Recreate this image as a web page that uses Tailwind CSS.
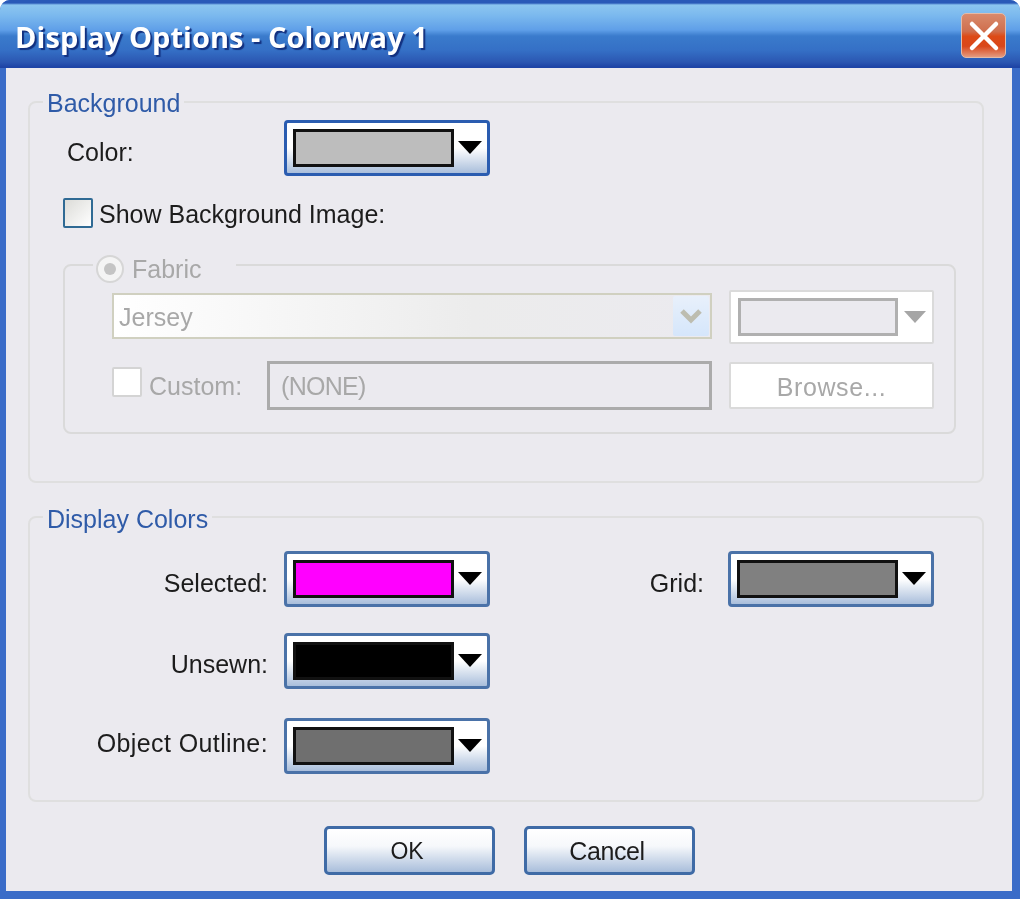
<!DOCTYPE html>
<html lang="en">
<head>
    <meta charset="UTF-8">
    <title>Display Options - Colorway 1</title>
    <script src="https://cdn.jsdelivr.net/npm/@tailwindcss/browser@4"></script>
</head>
<body class="bg-white">
<div class="w-[1020px] h-[899px] flex flex-col rounded-t-[10px] overflow-hidden bg-[#3a6cc8] font-['Liberation_Sans',sans-serif] text-[25px] leading-[30px] text-[#1c1c1c] blur-[0.6px]">

    <!-- Title bar -->
    <div class="h-[68px] shrink-0 flex items-center justify-between pl-[15px] pr-[14px] bg-[linear-gradient(#2a5ab8_0,#2a5ab8_3px,#8cc6f0_5px,#7ab8ee_16px,#5f9fe8_30px,#3a7bcc_36px,#3570c6_50px,#2b57b2_62px,#1e44a6_67px)]">
        <span class="pt-[6px] font-['Open_Sans',sans-serif] font-bold text-[29px] tracking-[0.05px] text-white [text-shadow:2px_2px_1px_#12307f]">Display Options - Colorway 1</span>
        <div class="w-[45px] h-[45px] mt-[3px] rounded-[5px] border border-[#e3bba8] bg-[linear-gradient(#d98a6c_0,#cf6f4e_40%,#dd4a16_52%,#d9471a_75%,#e59a80_100%)] flex items-center justify-center">
            <svg width="34" height="34" viewBox="0 0 34 34"><path d="M5 5 L29 29 M29 5 L5 29" stroke="#fff" stroke-width="4.5" stroke-linecap="round"/></svg>
        </div>
    </div>

    <!-- Dialog body -->
    <div class="flex-1 ml-[6px] mr-[8px] mb-[8px] bg-[#ebeaef] pt-[19px] pl-[22px] pr-[28px]">

        <fieldset class="border-2 border-[#dfdfdf] rounded-[8px] h-[396px] min-w-0">
            <legend class="ml-[13px] px-[4px] h-[30px] leading-[32px] text-[#2f5ba8]">Background</legend>
            <div class="flex items-center pt-[3px] pl-[37px]">
                <span class="w-[217px] pt-[8px]">Color:</span>
                <div class="w-[206px] h-[56px] rounded-[4px] border-[3px] border-[#2a5cb0] bg-[linear-gradient(#ffffff_0,#ffffff_50%,#a9bedb_100%)] flex items-center pl-[6px] pr-[5px] justify-between">
                    <div class="w-[161px] h-[38px] border-[3px] border-[#111] bg-[#bdbdbd]"></div>
                    <svg class="mb-[2px]" width="24" height="13" viewBox="0 0 24 13"><polygon points="0,0 24,0 12,13" fill="#000"/></svg>
                </div>
            </div>
            <div class="flex items-center mt-[22px] pl-[33px]">
                <div class="w-[30px] h-[30px] border-2 border-[#2f6a94] rounded-[2px] bg-[linear-gradient(135deg,#dcdcd8,#ffffff)]"></div>
                <span class="ml-[6px] h-[30px] leading-[32px]">Show Background Image:</span>
            </div>

            <!-- Fabric group (disabled) -->
            <fieldset class="ml-[33px] mr-[26px] mt-[26px] h-[180px] border-2 border-[#dadada] rounded-[8px] min-w-0 text-[#a8a8a8]">
                <legend class="ml-[28px] w-[143px] h-[22px] flex items-center">
                    <div class="flex items-center translate-y-[4px]">
                        <div class="ml-[3px] w-[28px] h-[28px] rounded-full border-2 border-[#d6d6d6] bg-[#f4f4f4] flex items-center justify-center">
                            <div class="w-[12px] h-[12px] rounded-full bg-[#c4c4c4]"></div>
                        </div>
                        <span class="ml-[8px]">Fabric</span>
                    </div>
                </legend>
                <div class="flex pl-[47px] pr-[20px] pt-[14px]">
                    <div class="w-[600px] h-[46px] mt-[3px] border-2 border-[#d0d0c0] bg-[linear-gradient(90deg,#ffffff,#ececec_60%,#ebeaef)] flex items-center justify-between pl-[5px] pr-[1px]">
                        <span class="pt-[2px]">Jersey</span>
                        <div class="w-[36px] h-[40px] rounded-[2px] bg-[linear-gradient(#e8f0fb,#d5e6fb)] flex items-center justify-center">
                            <svg width="24" height="16" viewBox="0 0 24 16"><path d="M3 3 L12 12 L21 3" fill="none" stroke="#bdbdb0" stroke-width="5"/></svg>
                        </div>
                    </div>
                    <div class="ml-[17px] w-[205px] h-[54px] border-2 border-[#dadada] rounded-[2px] bg-white flex items-center justify-between pl-[7px] pr-[6px]">
                        <div class="w-[160px] h-[38px] border-[3px] border-[#b0b0b0] bg-[#ebeaef]"></div>
                        <svg width="22" height="12" viewBox="0 0 22 12"><polygon points="0,0 22,0 11,12" fill="#a6a6a6"/></svg>
                    </div>
                </div>
                <div class="flex items-center pl-[47px] pr-[20px] mt-[17px]">
                    <div class="w-[30px] h-[30px] mb-[8px] border-2 border-[#d4d4d4] rounded-[2px] bg-white"></div>
                    <span class="ml-[7px] w-[118px]">Custom:</span>
                    <div class="w-[445px] h-[49px] border-[3px] border-[#ababab] flex items-center pl-[11px] tracking-[-0.7px]">(NONE)</div>
                    <div class="ml-[17px] w-[205px] h-[47px] pt-[3px] border-2 border-[#dadada] rounded-[2px] bg-white flex items-center justify-center tracking-[0.6px]">Browse...</div>
                </div>
            </fieldset>
        </fieldset>

        <fieldset class="mt-[19px] border-2 border-[#dfdfdf] rounded-[8px] h-[300px] min-w-0">
            <legend class="ml-[13px] px-[4px] h-[30px] leading-[34px] text-[#2f5ba8]">Display Colors</legend>
            <div class="grid grid-cols-[238px_206px_230px_206px] items-center pt-[19px] [&>span]:text-right">
                <span class="pt-[8px]">Selected:</span>
                <div class="ml-[16px] w-[206px] h-[56px] rounded-[4px] border-[3px] border-[#4a72a8] bg-[linear-gradient(#ffffff_0,#ffffff_50%,#a9bedb_100%)] flex items-center pl-[6px] pr-[5px] justify-between">
                    <div class="w-[161px] h-[38px] border-[3px] border-[#111] bg-[#ff00ff]"></div>
                    <svg class="mb-[2px]" width="24" height="13" viewBox="0 0 24 13"><polygon points="0,0 24,0 12,13" fill="#000"/></svg>
                </div>
                <span class="pt-[8px]">Grid:</span>
                <div class="ml-[24px] w-[206px] h-[56px] rounded-[4px] border-[3px] border-[#4a72a8] bg-[linear-gradient(#ffffff_0,#ffffff_50%,#a9bedb_100%)] flex items-center pl-[6px] pr-[5px] justify-between">
                    <div class="w-[161px] h-[38px] border-[3px] border-[#111] bg-[#808080]"></div>
                    <svg class="mb-[2px]" width="24" height="13" viewBox="0 0 24 13"><polygon points="0,0 24,0 12,13" fill="#000"/></svg>
                </div>
            </div>
            <div class="grid grid-cols-[238px_206px] items-center mt-[26px] [&>span]:text-right">
                <span class="pt-[6px]">Unsewn:</span>
                <div class="ml-[16px] w-[206px] h-[56px] rounded-[4px] border-[3px] border-[#4a72a8] bg-[linear-gradient(#ffffff_0,#ffffff_50%,#a9bedb_100%)] flex items-center pl-[6px] pr-[5px] justify-between">
                    <div class="w-[161px] h-[38px] border-[3px] border-[#111] bg-black"></div>
                    <svg class="mb-[2px]" width="24" height="13" viewBox="0 0 24 13"><polygon points="0,0 24,0 12,13" fill="#000"/></svg>
                </div>
            </div>
            <div class="grid grid-cols-[238px_206px] items-center mt-[29px] [&>span]:text-right">
                <span class="pb-[6px] tracking-[0.4px]">Object Outline:</span>
                <div class="ml-[16px] w-[206px] h-[56px] rounded-[4px] border-[3px] border-[#4a72a8] bg-[linear-gradient(#ffffff_0,#ffffff_50%,#a9bedb_100%)] flex items-center pl-[6px] pr-[5px] justify-between">
                    <div class="w-[161px] h-[38px] border-[3px] border-[#111] bg-[#6f6f6f]"></div>
                    <svg class="mb-[2px]" width="24" height="13" viewBox="0 0 24 13"><polygon points="0,0 24,0 12,13" fill="#000"/></svg>
                </div>
            </div>
        </fieldset>

        <div class="flex justify-center gap-[29px] mt-[24px] pl-[6px]">
            <button class="w-[171px] h-[49px] pr-[4px] rounded-[5px] border-[3px] border-[#3f6ba6] bg-[linear-gradient(#ffffff_0,#f6f8fb_40%,#a9bedb_100%)] text-[23px]">OK</button>
            <button class="w-[171px] h-[49px] pr-[4px] rounded-[5px] border-[3px] border-[#3f6ba6] bg-[linear-gradient(#ffffff_0,#f6f8fb_40%,#a9bedb_100%)] tracking-[-0.4px]">Cancel</button>
        </div>
    </div>
</div>
</body>
</html>
